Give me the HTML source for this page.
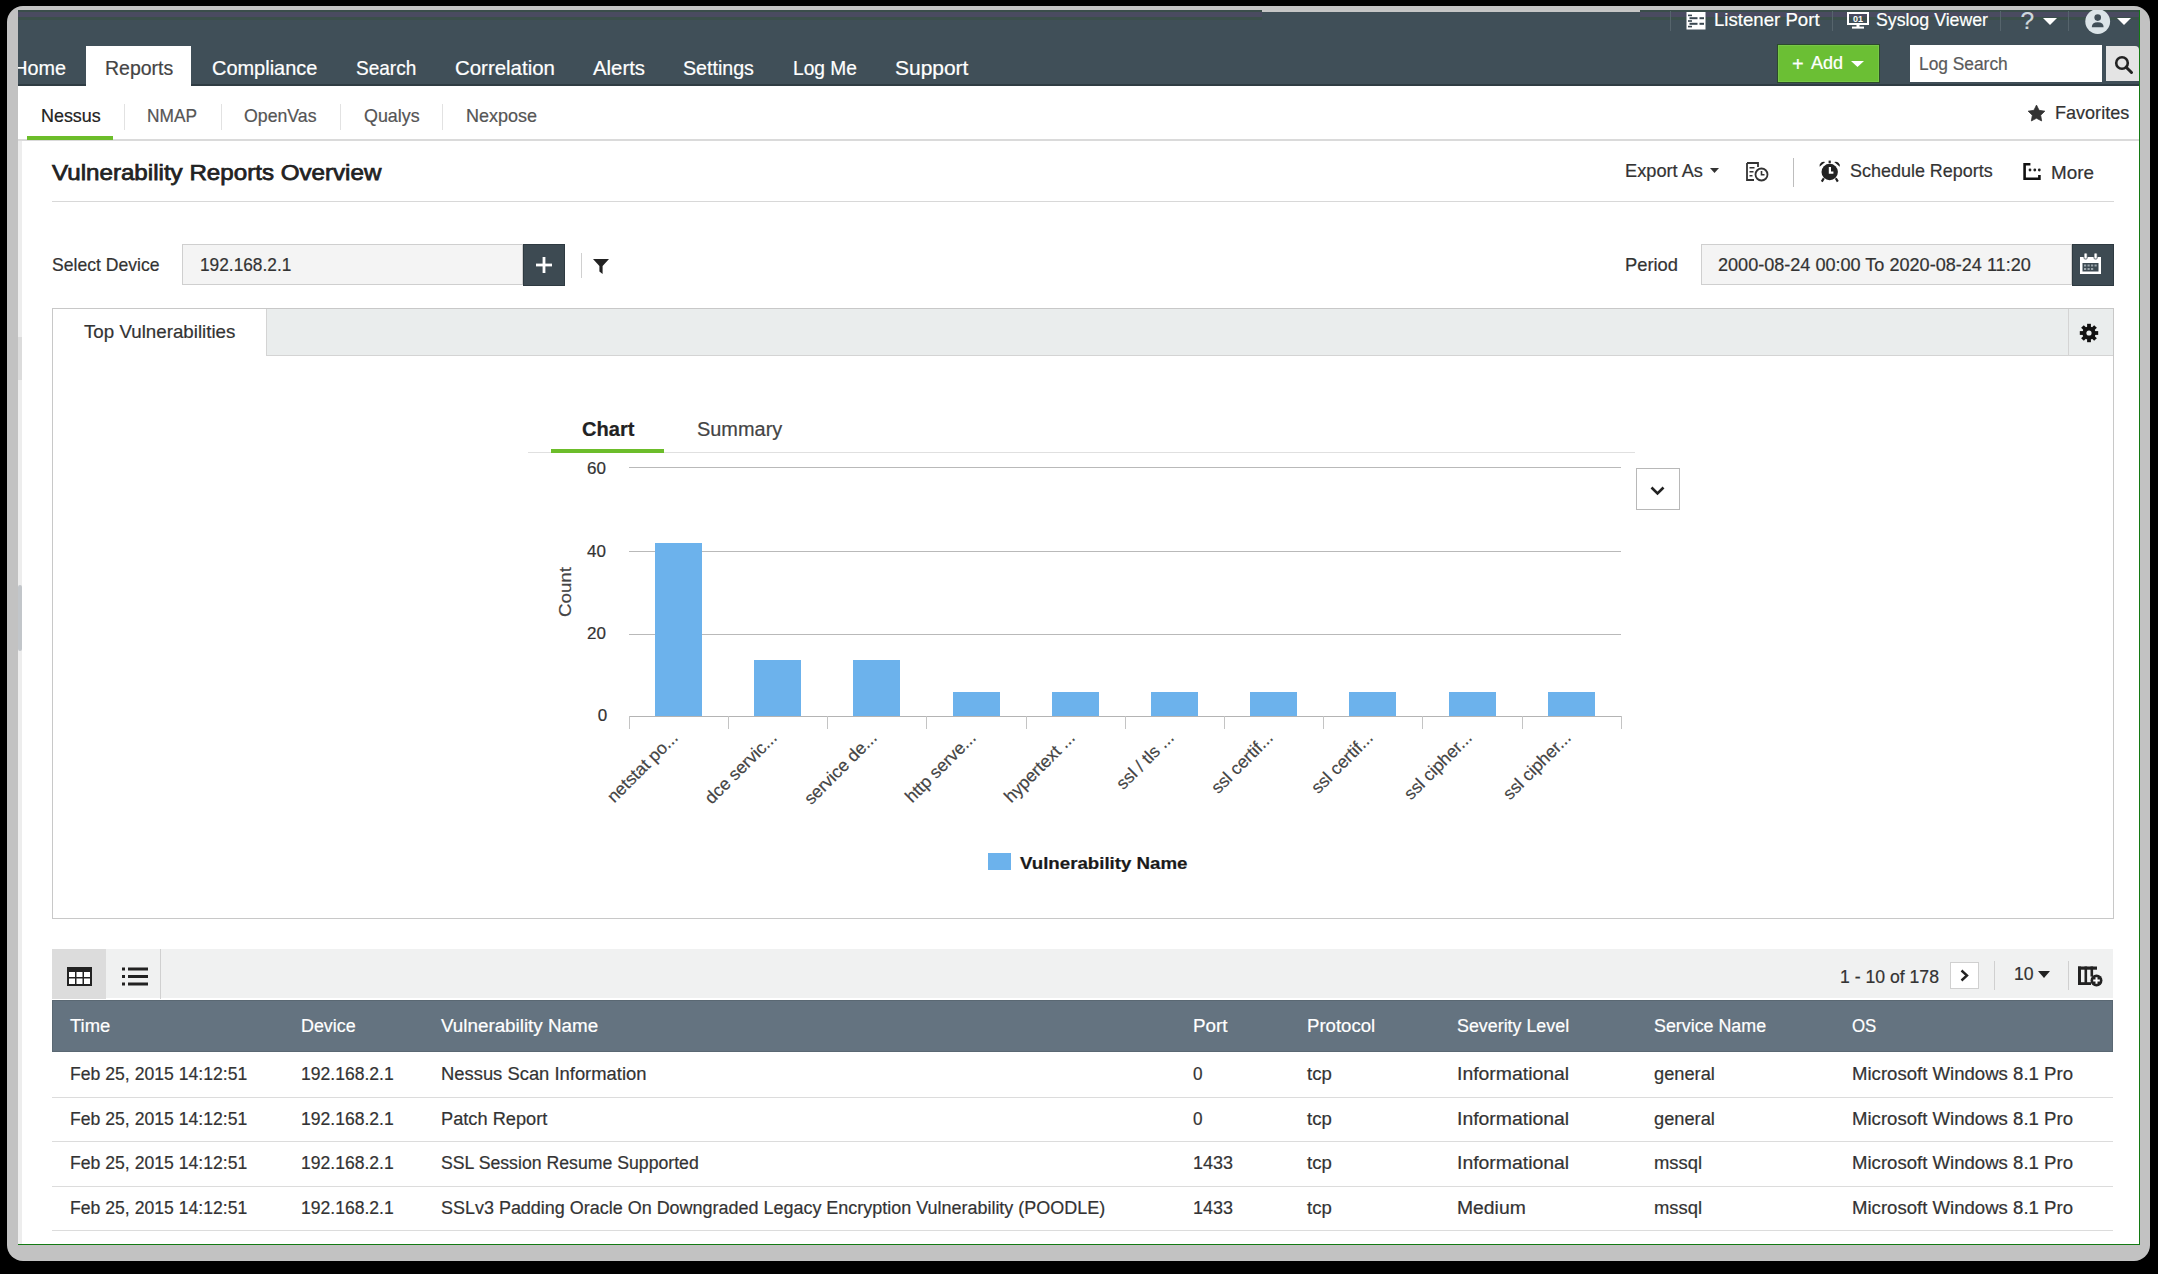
<!DOCTYPE html>
<html><head><meta charset="utf-8"><title>Vulnerability Reports Overview</title>
<style>
html,body{margin:0;padding:0;}
body{width:2158px;height:1274px;background:#000;position:relative;overflow:hidden;font-family:"Liberation Sans", sans-serif;}
#frame{position:absolute;left:7px;top:6px;width:2143px;height:1255px;background:#c2c2c2;border-radius:16px;}
#c{position:absolute;left:0;top:0;width:2158px;height:1274px;clip-path:inset(10px 19px 30px 18px);}
#bg{position:absolute;left:18px;top:10px;width:2121px;height:1234px;background:#fff;}
.t{position:absolute;white-space:nowrap;line-height:1;-webkit-text-stroke:0.2px currentColor;}
.r{position:absolute;}
</style></head>
<body>
<div id="frame"></div>
<div id="c">
<div id="bg"></div>
<div class="r" style="left:18px;top:141px;width:4px;height:1103px;background:#ededed"></div>
<div class="r" style="left:18px;top:337px;width:4px;height:43px;background:#dcdcdc"></div>
<div class="r" style="left:18px;top:585px;width:4px;height:66px;background:#c2c6ca;border-radius:2px"></div>
<div class="r" style="left:18px;top:10px;width:2121px;height:76px;background:#404f58"></div>
<div class="r" style="left:18px;top:10px;width:2121px;height:2px;background:#3a4d4a"></div>
<div class="r" style="left:18px;top:12px;width:2121px;height:5px;background:#4a4b60"></div>
<div class="r" style="left:18px;top:17px;width:2121px;height:3px;background:#3b4f4b"></div>
<div class="r" style="left:1262px;top:10px;width:378px;height:2px;background:#c6c6c6"></div>
<div class="r" style="left:1262px;top:12px;width:378px;height:8px;background:#404f58"></div>
<div class="r" style="left:18px;top:84px;width:2121px;height:2px;background:#2f3c43"></div>
<div class="r" style="left:1670px;top:11px;width:1px;height:20px;background:#56646c"></div>
<div class="r" style="left:1832px;top:11px;width:1px;height:20px;background:#56646c"></div>
<div class="r" style="left:2000px;top:11px;width:1px;height:20px;background:#56646c"></div>
<div class="r" style="left:2068px;top:11px;width:1px;height:20px;background:#56646c"></div>
<div class="r" style="left:86px;top:46px;width:105px;height:40px;background:#ffffff"></div>
<div class="t" style="left:13.2px;top:59.4px;font-size:19.8px;color:#fff;font-weight:normal;">Home</div>
<div class="t" style="left:104.7px;top:59.4px;font-size:19.8px;color:#444;font-weight:normal;transform:scaleX(0.9856);transform-origin:0 0;">Reports</div>
<div class="t" style="left:212.0px;top:59.4px;font-size:19.8px;color:#fff;font-weight:normal;transform:scaleX(1.0082);transform-origin:0 0;">Compliance</div>
<div class="t" style="left:355.6px;top:59.4px;font-size:19.8px;color:#fff;font-weight:normal;transform:scaleX(0.9623);transform-origin:0 0;">Search</div>
<div class="t" style="left:455.0px;top:59.4px;font-size:19.8px;color:#fff;font-weight:normal;transform:scaleX(1.0328);transform-origin:0 0;">Correlation</div>
<div class="t" style="left:593.0px;top:59.4px;font-size:19.8px;color:#fff;font-weight:normal;transform:scaleX(1.0279);transform-origin:0 0;">Alerts</div>
<div class="t" style="left:683.0px;top:59.4px;font-size:19.8px;color:#fff;font-weight:normal;transform:scaleX(0.9919);transform-origin:0 0;">Settings</div>
<div class="t" style="left:793.0px;top:59.4px;font-size:19.8px;color:#fff;font-weight:normal;transform:scaleX(0.9692);transform-origin:0 0;">Log Me</div>
<div class="t" style="left:895.0px;top:59.4px;font-size:19.8px;color:#fff;font-weight:normal;transform:scaleX(1.0591);transform-origin:0 0;">Support</div>
<div class="t" style="left:1714.4px;top:11.0px;font-size:18.6px;color:#fff;font-weight:normal;transform:scaleX(1.0013);transform-origin:0 0;">Listener Port</div>
<div class="t" style="left:1876.3px;top:11.0px;font-size:18.6px;color:#fff;font-weight:normal;transform:scaleX(0.9536);transform-origin:0 0;">Syslog Viewer</div>
<svg class="r" style="left:1686px;top:12px" width="20" height="18" viewBox="0 0 20 18">
<rect x="0.5" y="0" width="19" height="17.5" fill="#fff"/>
<g fill="#3a4750"><rect x="2" y="2.6" width="4" height="1.6"/><rect x="2" y="8.2" width="4" height="1.6"/><rect x="2" y="13.8" width="4" height="1.6"/>
<rect x="3.5" y="5.2" width="8" height="2"/><rect x="13.5" y="5.2" width="4.5" height="2"/>
<rect x="3.5" y="10.8" width="8" height="2"/><rect x="13.5" y="10.8" width="4.5" height="2"/></g>
</svg>
<svg class="r" style="left:1847px;top:12px" width="22" height="17" viewBox="0 0 22 17">
<rect x="1" y="1" width="20" height="11" fill="none" stroke="#fff" stroke-width="2"/>
<text x="11" y="10" font-size="9" font-family="Liberation Sans" font-weight="bold" fill="#fff" text-anchor="middle">01</text>
<rect x="9.5" y="12" width="3" height="3" fill="#fff"/><rect x="5" y="14.6" width="12" height="2" fill="#fff"/>
</svg>
<div class="t" style="left:2020.5px;top:9.1px;font-size:24.5px;color:#cfd8dd;font-weight:normal;">?</div>
<svg class="r" style="left:2043px;top:18px" width="14" height="7"><path d="M0 0H14L7 7Z" fill="#fff"/></svg>
<svg class="r" style="left:2085px;top:9px" width="26" height="26" viewBox="0 0 26 26">
<circle cx="12.7" cy="12.5" r="12.4" fill="#dbe4e8"/>
<circle cx="12.7" cy="8.6" r="3.3" fill="#404f58"/>
<path d="M6.8 18.2 Q6.8 13.2 12.7 13.2 Q18.6 13.2 18.6 18.2 Z" fill="#404f58"/>
</svg>
<svg class="r" style="left:2117px;top:18px" width="14" height="7"><path d="M0 0H14L7 7Z" fill="#fff"/></svg>
<div class="r" style="left:1778px;top:45px;width:101px;height:37px;background:#6bbf34;box-shadow:inset 0 0 0 1px #77c846,0 0 0 1px #2c4a2c"></div>
<div class="t" style="left:1792.0px;top:53.6px;font-size:20px;color:#fff;font-weight:normal;">+</div>
<div class="t" style="left:1811.0px;top:54.3px;font-size:18px;color:#fff;font-weight:normal;">Add</div>
<svg class="r" style="left:1851px;top:61px" width="13" height="6"><path d="M0 0H13L6.5 6Z" fill="#fff"/></svg>
<div class="r" style="left:1910px;top:45px;width:192px;height:37px;background:#fff"></div>
<div class="t" style="left:1919.0px;top:54.6px;font-size:18px;color:#5a5a5a;font-weight:normal;transform:scaleX(0.9634);transform-origin:0 0;">Log Search</div>
<div class="r" style="left:2106px;top:46px;width:33px;height:35px;background:#e4e4e4;border-top-right-radius:4px"></div>
<svg class="r" style="left:2114px;top:55px" width="20" height="20" viewBox="0 0 20 20">
<circle cx="8" cy="8" r="5.8" fill="none" stroke="#222" stroke-width="2.6"/>
<path d="M12.2 12.2 L17.5 17.5" stroke="#222" stroke-width="3" stroke-linecap="round"/>
</svg>
<div class="t" style="left:40.5px;top:107.8px;font-size:17.9px;color:#222;font-weight:normal;transform:scaleX(1.0017);transform-origin:0 0;">Nessus</div>
<div class="t" style="left:147.0px;top:107.8px;font-size:17.9px;color:#555;font-weight:normal;transform:scaleX(0.9665);transform-origin:0 0;">NMAP</div>
<div class="t" style="left:244.4px;top:107.8px;font-size:17.9px;color:#555;font-weight:normal;transform:scaleX(0.9904);transform-origin:0 0;">OpenVas</div>
<div class="t" style="left:363.8px;top:107.8px;font-size:17.9px;color:#555;font-weight:normal;transform:scaleX(0.9988);transform-origin:0 0;">Qualys</div>
<div class="t" style="left:466.0px;top:107.8px;font-size:17.9px;color:#555;font-weight:normal;transform:scaleX(1.0054);transform-origin:0 0;">Nexpose</div>
<div class="r" style="left:124px;top:104px;width:1px;height:26px;background:#e2e2e2"></div>
<div class="r" style="left:221px;top:104px;width:1px;height:26px;background:#e2e2e2"></div>
<div class="r" style="left:340px;top:104px;width:1px;height:26px;background:#e2e2e2"></div>
<div class="r" style="left:442px;top:104px;width:1px;height:26px;background:#e2e2e2"></div>
<div class="r" style="left:18px;top:139px;width:2121px;height:2px;background:#dadada"></div>
<div class="r" style="left:27px;top:136px;width:86px;height:4px;background:#6cbd2a"></div>
<svg class="r" style="left:2027px;top:104px" width="19" height="18" viewBox="0 0 24 23">
<path d="M12.00 1.40 L15.29 8.07 L22.65 9.14 L17.33 14.33 L18.58 21.66 L12.00 18.20 L5.42 21.66 L6.67 14.33 L1.35 9.14 L8.71 8.07Z" fill="#333" stroke="#333" stroke-width="1" stroke-linejoin="round"/>
</svg>
<div class="t" style="left:2055.2px;top:104.4px;font-size:18.6px;color:#333;font-weight:normal;transform:scaleX(0.9706);transform-origin:0 0;">Favorites</div>
<div class="t" style="left:52.2px;top:161.0px;font-size:22.8px;color:#222;font-weight:normal;transform:scaleX(1.0595);transform-origin:0 0;-webkit-text-stroke:0.75px #222;">Vulnerability Reports Overview</div>
<div class="r" style="left:52px;top:201px;width:2062px;height:1px;background:#d8d8d8"></div>
<div class="t" style="left:1625.0px;top:161.9px;font-size:18.4px;color:#333;font-weight:normal;transform:scaleX(0.9905);transform-origin:0 0;">Export As</div>
<svg class="r" style="left:1710px;top:168px" width="9" height="5"><path d="M0 0H9L4.5 5Z" fill="#333"/></svg>
<svg class="r" style="left:1746px;top:162px" width="23" height="20" viewBox="0 0 23 20">
<path d="M1 1H12V5" fill="none" stroke="#333" stroke-width="1.8"/>
<path d="M1 1V18H8" fill="none" stroke="#333" stroke-width="1.8"/>
<rect x="3.5" y="5" width="5" height="1.5" fill="#333"/><rect x="3.5" y="9" width="4" height="1.5" fill="#333"/><rect x="3.5" y="13" width="3" height="1.5" fill="#333"/>
<circle cx="15.5" cy="12.5" r="6" fill="#fff" stroke="#333" stroke-width="1.8"/>
<path d="M15.5 9V12.8H18.5" fill="none" stroke="#333" stroke-width="1.6"/>
</svg>
<div class="r" style="left:1793px;top:158px;width:1px;height:29px;background:#bdbdbd"></div>
<svg class="r" style="left:1818px;top:159px" width="24" height="24" viewBox="0 0 24 24">
<circle cx="11.7" cy="13" r="8.2" fill="#222"/>
<path d="M1.6 7.8 A4.2 4.2 0 0 1 7.2 3 Z" fill="#222"/><path d="M21.8 7.8 A4.2 4.2 0 0 0 16.2 3 Z" fill="#222"/>
<rect x="10.6" y="1.6" width="2.2" height="2.6" fill="#222"/>
<path d="M11.9 8V13.6H15.4" fill="none" stroke="#fff" stroke-width="2.2"/>
<path d="M5.8 19.2L3.8 22.6M17.8 19.2L19.8 22.6" stroke="#222" stroke-width="2.2"/>
</svg>
<div class="t" style="left:1849.5px;top:161.9px;font-size:18.4px;color:#333;font-weight:normal;transform:scaleX(0.9762);transform-origin:0 0;">Schedule Reports</div>
<svg class="r" style="left:2022px;top:162px" width="20" height="19" viewBox="0 0 20 19">
<path d="M8.4 2.2H2.6V16.8H17.4V13" fill="none" stroke="#111" stroke-width="2.6"/>
<circle cx="8" cy="8" r="1.4" fill="#222"/><circle cx="12.8" cy="8" r="1.4" fill="#222"/><circle cx="17.3" cy="8" r="1.4" fill="#222"/>
</svg>
<div class="t" style="left:2051.0px;top:164.4px;font-size:18.4px;color:#333;font-weight:normal;transform:scaleX(1.0250);transform-origin:0 0;">More</div>
<div class="t" style="left:52.0px;top:256.4px;font-size:18.4px;color:#333;font-weight:normal;transform:scaleX(0.9563);transform-origin:0 0;">Select Device</div>
<div class="r" style="left:182px;top:244px;width:341px;height:41px;background:#f4f4f4;box-shadow:inset 0 0 0 1px #cfcfcf"></div>
<div class="t" style="left:199.6px;top:256.4px;font-size:18.4px;color:#333;font-weight:normal;transform:scaleX(0.9399);transform-origin:0 0;">192.168.2.1</div>
<div class="r" style="left:523px;top:244px;width:42px;height:42px;background:#3d4a52;box-shadow:inset 0 0 0 1px #2e3a41"></div>
<svg class="r" style="left:536px;top:257px" width="16" height="16"><rect x="6.6" y="0" width="2.8" height="16" fill="#fff"/><rect x="0" y="6.6" width="16" height="2.8" fill="#fff"/></svg>
<div class="r" style="left:581px;top:253px;width:1px;height:25px;background:#d0d0d0"></div>
<svg class="r" style="left:593px;top:259px" width="16" height="15"><path d="M0 0H16L9.6 7V15L6.4 12.5V7Z" fill="#222"/></svg>
<div class="t" style="left:1625.0px;top:256.3px;font-size:18.4px;color:#333;font-weight:normal;transform:scaleX(0.9967);transform-origin:0 0;">Period</div>
<div class="r" style="left:1701px;top:244px;width:371px;height:41px;background:#f4f4f4;box-shadow:inset 0 0 0 1px #cfcfcf"></div>
<div class="t" style="left:1717.7px;top:256.4px;font-size:18.4px;color:#333;font-weight:normal;transform:scaleX(0.9824);transform-origin:0 0;">2000-08-24 00:00 To 2020-08-24 11:20</div>
<div class="r" style="left:2072px;top:244px;width:42px;height:42px;background:#3d4a52;box-shadow:inset 0 0 0 1px #2e3a41"></div>
<svg class="r" style="left:2079px;top:252px" width="24" height="24" viewBox="0 0 24 24">
<rect x="1" y="5" width="21" height="17" fill="#fff"/>
<rect x="3.5" y="11" width="16" height="8.5" fill="#3d4a52"/>
<rect x="5" y="1" width="3.2" height="6" rx="1" fill="#fff" stroke="#3d4a52" stroke-width="0.8"/><rect x="15" y="1" width="3.2" height="6" rx="1" fill="#fff" stroke="#3d4a52" stroke-width="0.8"/>
<g fill="#9aa4aa"><rect x="5" y="12.5" width="2.2" height="2"/><rect x="8.5" y="12.5" width="2.2" height="2"/><rect x="12" y="12.5" width="2.2" height="2"/><rect x="15.5" y="12.5" width="2.2" height="2"/>
<rect x="5" y="16" width="2.2" height="2"/><rect x="8.5" y="16" width="2.2" height="2"/><rect x="12" y="16" width="2.2" height="2"/></g>
</svg>
<div class="r" style="left:52px;top:308px;width:2062px;height:611px;box-shadow:inset 0 0 0 1px #c8c8c8;background:#fff"></div>
<div class="r" style="left:266px;top:309px;width:1847px;height:47px;background:#eaeded;border-left:1px solid #d4d4d4;border-bottom:1px solid #d4d4d4;box-sizing:border-box"></div>
<div class="r" style="left:2068px;top:309px;width:45px;height:47px;background:#eaeded;border-left:1px solid #d4d4d4;border-bottom:1px solid #d4d4d4;box-sizing:border-box"></div>
<div class="t" style="left:84.2px;top:323.2px;font-size:18.4px;color:#333;font-weight:normal;transform:scaleX(1.0190);transform-origin:0 0;">Top Vulnerabilities</div>
<svg class="r" style="left:2079px;top:323px" width="20" height="20" viewBox="-10 -10 20 20">
<g fill="#111"><rect x="-1.9" y="-9.2" width="3.8" height="5" transform="rotate(0)"/><rect x="-1.9" y="-9.2" width="3.8" height="5" transform="rotate(45)"/><rect x="-1.9" y="-9.2" width="3.8" height="5" transform="rotate(90)"/><rect x="-1.9" y="-9.2" width="3.8" height="5" transform="rotate(135)"/><rect x="-1.9" y="-9.2" width="3.8" height="5" transform="rotate(180)"/><rect x="-1.9" y="-9.2" width="3.8" height="5" transform="rotate(225)"/><rect x="-1.9" y="-9.2" width="3.8" height="5" transform="rotate(270)"/><rect x="-1.9" y="-9.2" width="3.8" height="5" transform="rotate(315)"/><circle r="6.6"/></g><circle r="2.6" fill="#eaeded"/>
</svg>
<div class="t" style="left:582.0px;top:420.0px;font-size:19.6px;color:#222;font-weight:bold;transform:scaleX(1.0243);transform-origin:0 0;">Chart</div>
<div class="t" style="left:697.4px;top:420.0px;font-size:19.6px;color:#444;font-weight:normal;transform:scaleX(1.0168);transform-origin:0 0;">Summary</div>
<div class="r" style="left:528px;top:452px;width:1107px;height:1px;background:#e0e0e0"></div>
<div class="r" style="left:551px;top:449px;width:113px;height:4px;background:#6cbd2a"></div>
<div class="r" style="left:1636px;top:468px;width:44px;height:42px;box-shadow:inset 0 0 0 1px #b8b8b8;background:#fff"></div>
<svg class="r" style="left:1650px;top:486px" width="15" height="10"><path d="M1.5 1.5L7.5 7.5L13.5 1.5" fill="none" stroke="#222" stroke-width="2.6"/></svg>
<div class="r" style="left:629px;top:467px;width:992px;height:1px;background:#b9b9b9"></div>
<div class="r" style="left:629px;top:551px;width:992px;height:1px;background:#b9b9b9"></div>
<div class="r" style="left:629px;top:634px;width:992px;height:1px;background:#b9b9b9"></div>
<div class="r" style="left:629px;top:716px;width:992px;height:1px;background:#b4b4b4"></div>
<div class="r" style="left:629px;top:716px;width:1px;height:13px;background:#c4c4c4"></div>
<div class="r" style="left:728px;top:716px;width:1px;height:13px;background:#c4c4c4"></div>
<div class="r" style="left:827px;top:716px;width:1px;height:13px;background:#c4c4c4"></div>
<div class="r" style="left:926px;top:716px;width:1px;height:13px;background:#c4c4c4"></div>
<div class="r" style="left:1026px;top:716px;width:1px;height:13px;background:#c4c4c4"></div>
<div class="r" style="left:1125px;top:716px;width:1px;height:13px;background:#c4c4c4"></div>
<div class="r" style="left:1224px;top:716px;width:1px;height:13px;background:#c4c4c4"></div>
<div class="r" style="left:1323px;top:716px;width:1px;height:13px;background:#c4c4c4"></div>
<div class="r" style="left:1422px;top:716px;width:1px;height:13px;background:#c4c4c4"></div>
<div class="r" style="left:1522px;top:716px;width:1px;height:13px;background:#c4c4c4"></div>
<div class="r" style="left:1621px;top:716px;width:1px;height:13px;background:#c4c4c4"></div>
<div class="t" style="left:587.0px;top:459.5px;font-size:17px;color:#333;font-weight:normal;">60</div>
<div class="t" style="left:587.0px;top:542.8px;font-size:17px;color:#333;font-weight:normal;">40</div>
<div class="t" style="left:587.0px;top:625.3px;font-size:17px;color:#333;font-weight:normal;">20</div>
<div class="t" style="left:597.7px;top:707.2px;font-size:17px;color:#333;font-weight:normal;">0</div>
<div class="t" style="left:565px;top:592px;font-size:17px;color:#444;transform:translate(-50%,-50%) rotate(-90deg) scaleX(1.10);transform-origin:center">Count</div>
<div class="r" style="left:654.9px;top:543.4px;width:47px;height:172.6px;background:#6cb2ec"></div>
<div class="t" style="left:669.1px;top:728.6px;font-size:17.5px;color:#444;transform:translateX(-100%) rotate(-45deg);transform-origin:100% 0">netstat po...</div>
<div class="r" style="left:754.1px;top:659.6px;width:47px;height:56.4px;background:#6cb2ec"></div>
<div class="t" style="left:768.3px;top:728.6px;font-size:17.5px;color:#444;transform:translateX(-100%) rotate(-45deg);transform-origin:100% 0">dce servic...</div>
<div class="r" style="left:853.3px;top:659.6px;width:47px;height:56.4px;background:#6cb2ec"></div>
<div class="t" style="left:867.5px;top:728.6px;font-size:17.5px;color:#444;transform:translateX(-100%) rotate(-45deg);transform-origin:100% 0">service de...</div>
<div class="r" style="left:952.5px;top:691.9px;width:47px;height:24.1px;background:#6cb2ec"></div>
<div class="t" style="left:966.7px;top:728.6px;font-size:17.5px;color:#444;transform:translateX(-100%) rotate(-45deg);transform-origin:100% 0">http serve...</div>
<div class="r" style="left:1051.7px;top:691.9px;width:47px;height:24.1px;background:#6cb2ec"></div>
<div class="t" style="left:1065.9px;top:728.6px;font-size:17.5px;color:#444;transform:translateX(-100%) rotate(-45deg);transform-origin:100% 0">hypertext ...</div>
<div class="r" style="left:1150.9px;top:691.9px;width:47px;height:24.1px;background:#6cb2ec"></div>
<div class="t" style="left:1165.1px;top:728.6px;font-size:17.5px;color:#444;transform:translateX(-100%) rotate(-45deg);transform-origin:100% 0">ssl / tls ...</div>
<div class="r" style="left:1250.1px;top:691.9px;width:47px;height:24.1px;background:#6cb2ec"></div>
<div class="t" style="left:1264.3px;top:728.6px;font-size:17.5px;color:#444;transform:translateX(-100%) rotate(-45deg);transform-origin:100% 0">ssl certif...</div>
<div class="r" style="left:1349.3px;top:691.9px;width:47px;height:24.1px;background:#6cb2ec"></div>
<div class="t" style="left:1363.5px;top:728.6px;font-size:17.5px;color:#444;transform:translateX(-100%) rotate(-45deg);transform-origin:100% 0">ssl certif...</div>
<div class="r" style="left:1448.5px;top:691.9px;width:47px;height:24.1px;background:#6cb2ec"></div>
<div class="t" style="left:1462.7px;top:728.6px;font-size:17.5px;color:#444;transform:translateX(-100%) rotate(-45deg);transform-origin:100% 0">ssl cipher...</div>
<div class="r" style="left:1547.7px;top:691.9px;width:47px;height:24.1px;background:#6cb2ec"></div>
<div class="t" style="left:1561.9px;top:728.6px;font-size:17.5px;color:#444;transform:translateX(-100%) rotate(-45deg);transform-origin:100% 0">ssl cipher...</div>
<div class="r" style="left:988px;top:853px;width:23px;height:17px;background:#6cb2ec"></div>
<div class="t" style="left:1019.8px;top:855.4px;font-size:16.4px;color:#1a1a1a;font-weight:bold;transform:scaleX(1.1393);transform-origin:0 0;">Vulnerability Name</div>
<div class="r" style="left:52px;top:949px;width:2061px;height:50px;background:#f0f1f1"></div>
<div class="r" style="left:52px;top:998px;width:2061px;height:2px;background:#fff"></div>
<div class="r" style="left:52px;top:949px;width:54px;height:50px;background:#dcdcdc"></div>
<div class="r" style="left:160px;top:949px;width:1px;height:50px;background:#d0d0d0"></div>
<svg class="r" style="left:67px;top:967px" width="25" height="19" viewBox="0 0 25 19">
<rect x="0" y="0" width="25" height="19" fill="#222"/>
<g fill="#fff"><rect x="2" y="5" width="6" height="5"/><rect x="9.5" y="5" width="6" height="5"/><rect x="17" y="5" width="6" height="5"/>
<rect x="2" y="11.5" width="6" height="5.5"/><rect x="9.5" y="11.5" width="6" height="5.5"/><rect x="17" y="11.5" width="6" height="5.5"/></g>
</svg>
<svg class="r" style="left:122px;top:967px" width="26" height="19" viewBox="0 0 26 19">
<g fill="#222"><rect x="0" y="0.5" width="3" height="3"/><rect x="0" y="8" width="3" height="3"/><rect x="0" y="15.5" width="3" height="3"/>
<rect x="6" y="0.5" width="20" height="3"/><rect x="6" y="8" width="20" height="3"/><rect x="6" y="15.5" width="20" height="3"/></g>
</svg>
<div class="t" style="left:1840.3px;top:967.6px;font-size:18.2px;color:#333;font-weight:normal;transform:scaleX(0.9688);transform-origin:0 0;">1 - 10 of 178</div>
<div class="r" style="left:1950px;top:962px;width:29px;height:27px;background:#fff;box-shadow:inset 0 0 0 1px #d0d0d0"></div>
<svg class="r" style="left:1960px;top:969px" width="9" height="13"><path d="M1.5 1.5L7 6.5L1.5 11.5" fill="none" stroke="#222" stroke-width="2.4"/></svg>
<div class="r" style="left:1994px;top:961px;width:1px;height:29px;background:#d0d0d0"></div>
<div class="t" style="left:2014.0px;top:966.1px;font-size:17.6px;color:#333;font-weight:normal;">10</div>
<svg class="r" style="left:2038px;top:971px" width="12" height="7"><path d="M0 0H12L6 7Z" fill="#222"/></svg>
<div class="r" style="left:2068px;top:961px;width:1px;height:29px;background:#d0d0d0"></div>
<svg class="r" style="left:2078px;top:966px" width="25" height="21" viewBox="0 0 25 21">
<g fill="#222"><rect x="0" y="0.5" width="19" height="3.2"/><rect x="0" y="0.5" width="3" height="18.5"/><rect x="6.5" y="0.5" width="2.6" height="18.5"/><rect x="12.5" y="0.5" width="2.6" height="10"/>
<rect x="0" y="16.2" width="13" height="2.8"/></g>
<circle cx="18.5" cy="14.5" r="6" fill="#222"/>
<path d="M18.5 11.2V17.8M15.2 14.5H21.8" stroke="#fff" stroke-width="2"/>
</svg>
<div class="r" style="left:52px;top:1000px;width:2061px;height:52px;background:#647380;box-shadow:inset 0 0 0 1px #5a6873"></div>
<div class="t" style="left:70.2px;top:1016.8px;font-size:18px;color:#fff;font-weight:normal;transform:scaleX(1.0221);transform-origin:0 0;">Time</div>
<div class="t" style="left:300.6px;top:1016.8px;font-size:18px;color:#fff;font-weight:normal;transform:scaleX(0.9929);transform-origin:0 0;">Device</div>
<div class="t" style="left:440.8px;top:1016.8px;font-size:18px;color:#fff;font-weight:normal;transform:scaleX(1.0446);transform-origin:0 0;">Vulnerability Name</div>
<div class="t" style="left:1193.0px;top:1016.8px;font-size:18px;color:#fff;font-weight:normal;transform:scaleX(1.0445);transform-origin:0 0;">Port</div>
<div class="t" style="left:1307.4px;top:1016.8px;font-size:18px;color:#fff;font-weight:normal;transform:scaleX(1.0324);transform-origin:0 0;">Protocol</div>
<div class="t" style="left:1457.3px;top:1016.8px;font-size:18px;color:#fff;font-weight:normal;transform:scaleX(0.9917);transform-origin:0 0;">Severity Level</div>
<div class="t" style="left:1654.4px;top:1016.8px;font-size:18px;color:#fff;font-weight:normal;transform:scaleX(0.9917);transform-origin:0 0;">Service Name</div>
<div class="t" style="left:1852.0px;top:1016.8px;font-size:18px;color:#fff;font-weight:normal;transform:scaleX(0.9343);transform-origin:0 0;">OS</div>
<div class="t" style="left:70.2px;top:1065.2px;font-size:18px;color:#333;font-weight:normal;transform:scaleX(0.9786);transform-origin:0 0;">Feb 25, 2015 14:12:51</div>
<div class="t" style="left:300.6px;top:1065.2px;font-size:18px;color:#333;font-weight:normal;transform:scaleX(0.9755);transform-origin:0 0;">192.168.2.1</div>
<div class="t" style="left:440.8px;top:1065.2px;font-size:18px;color:#333;font-weight:normal;transform:scaleX(1.0216);transform-origin:0 0;">Nessus Scan Information</div>
<div class="t" style="left:1193.0px;top:1065.2px;font-size:18px;color:#333;font-weight:normal;transform:scaleX(0.9510);transform-origin:0 0;">0</div>
<div class="t" style="left:1307.4px;top:1065.2px;font-size:18px;color:#333;font-weight:normal;transform:scaleX(1.0320);transform-origin:0 0;">tcp</div>
<div class="t" style="left:1457.3px;top:1065.2px;font-size:18px;color:#333;font-weight:normal;transform:scaleX(1.0775);transform-origin:0 0;">Informational</div>
<div class="t" style="left:1654.4px;top:1065.2px;font-size:18px;color:#333;font-weight:normal;transform:scaleX(1.0128);transform-origin:0 0;">general</div>
<div class="t" style="left:1852.0px;top:1065.2px;font-size:18px;color:#333;font-weight:normal;transform:scaleX(1.0322);transform-origin:0 0;">Microsoft Windows 8.1 Pro</div>
<div class="r" style="left:52px;top:1097px;width:2061px;height:1px;background:#dcdcdc"></div>
<div class="t" style="left:70.2px;top:1109.7px;font-size:18px;color:#333;font-weight:normal;transform:scaleX(0.9786);transform-origin:0 0;">Feb 25, 2015 14:12:51</div>
<div class="t" style="left:300.6px;top:1109.7px;font-size:18px;color:#333;font-weight:normal;transform:scaleX(0.9755);transform-origin:0 0;">192.168.2.1</div>
<div class="t" style="left:440.8px;top:1109.7px;font-size:18px;color:#333;font-weight:normal;transform:scaleX(1.0121);transform-origin:0 0;">Patch Report</div>
<div class="t" style="left:1193.0px;top:1109.7px;font-size:18px;color:#333;font-weight:normal;transform:scaleX(0.9510);transform-origin:0 0;">0</div>
<div class="t" style="left:1307.4px;top:1109.7px;font-size:18px;color:#333;font-weight:normal;transform:scaleX(1.0320);transform-origin:0 0;">tcp</div>
<div class="t" style="left:1457.3px;top:1109.7px;font-size:18px;color:#333;font-weight:normal;transform:scaleX(1.0775);transform-origin:0 0;">Informational</div>
<div class="t" style="left:1654.4px;top:1109.7px;font-size:18px;color:#333;font-weight:normal;transform:scaleX(1.0128);transform-origin:0 0;">general</div>
<div class="t" style="left:1852.0px;top:1109.7px;font-size:18px;color:#333;font-weight:normal;transform:scaleX(1.0322);transform-origin:0 0;">Microsoft Windows 8.1 Pro</div>
<div class="r" style="left:52px;top:1141px;width:2061px;height:1px;background:#dcdcdc"></div>
<div class="t" style="left:70.2px;top:1154.2px;font-size:18px;color:#333;font-weight:normal;transform:scaleX(0.9786);transform-origin:0 0;">Feb 25, 2015 14:12:51</div>
<div class="t" style="left:300.6px;top:1154.2px;font-size:18px;color:#333;font-weight:normal;transform:scaleX(0.9755);transform-origin:0 0;">192.168.2.1</div>
<div class="t" style="left:440.8px;top:1154.2px;font-size:18px;color:#333;font-weight:normal;transform:scaleX(0.9820);transform-origin:0 0;">SSL Session Resume Supported</div>
<div class="t" style="left:1193.0px;top:1154.2px;font-size:18px;color:#333;font-weight:normal;transform:scaleX(0.9988);transform-origin:0 0;">1433</div>
<div class="t" style="left:1307.4px;top:1154.2px;font-size:18px;color:#333;font-weight:normal;transform:scaleX(1.0320);transform-origin:0 0;">tcp</div>
<div class="t" style="left:1457.3px;top:1154.2px;font-size:18px;color:#333;font-weight:normal;transform:scaleX(1.0775);transform-origin:0 0;">Informational</div>
<div class="t" style="left:1654.4px;top:1154.2px;font-size:18px;color:#333;font-weight:normal;transform:scaleX(1.0238);transform-origin:0 0;">mssql</div>
<div class="t" style="left:1852.0px;top:1154.2px;font-size:18px;color:#333;font-weight:normal;transform:scaleX(1.0322);transform-origin:0 0;">Microsoft Windows 8.1 Pro</div>
<div class="r" style="left:52px;top:1186px;width:2061px;height:1px;background:#dcdcdc"></div>
<div class="t" style="left:70.2px;top:1198.7px;font-size:18px;color:#333;font-weight:normal;transform:scaleX(0.9786);transform-origin:0 0;">Feb 25, 2015 14:12:51</div>
<div class="t" style="left:300.6px;top:1198.7px;font-size:18px;color:#333;font-weight:normal;transform:scaleX(0.9755);transform-origin:0 0;">192.168.2.1</div>
<div class="t" style="left:440.8px;top:1198.7px;font-size:18px;color:#333;font-weight:normal;transform:scaleX(0.9977);transform-origin:0 0;">SSLv3 Padding Oracle On Downgraded Legacy Encryption Vulnerability (POODLE)</div>
<div class="t" style="left:1193.0px;top:1198.7px;font-size:18px;color:#333;font-weight:normal;transform:scaleX(0.9988);transform-origin:0 0;">1433</div>
<div class="t" style="left:1307.4px;top:1198.7px;font-size:18px;color:#333;font-weight:normal;transform:scaleX(1.0320);transform-origin:0 0;">tcp</div>
<div class="t" style="left:1457.3px;top:1198.7px;font-size:18px;color:#333;font-weight:normal;transform:scaleX(1.0736);transform-origin:0 0;">Medium</div>
<div class="t" style="left:1654.4px;top:1198.7px;font-size:18px;color:#333;font-weight:normal;transform:scaleX(1.0238);transform-origin:0 0;">mssql</div>
<div class="t" style="left:1852.0px;top:1198.7px;font-size:18px;color:#333;font-weight:normal;transform:scaleX(1.0322);transform-origin:0 0;">Microsoft Windows 8.1 Pro</div>
<div class="r" style="left:52px;top:1230px;width:2061px;height:1px;background:#dcdcdc"></div>
</div>
<div class="r" style="left:2139px;top:10px;width:1px;height:1235px;background:#137a13"></div>
<div class="r" style="left:18px;top:1244px;width:2122px;height:1px;background:#137a13"></div>
</body></html>
